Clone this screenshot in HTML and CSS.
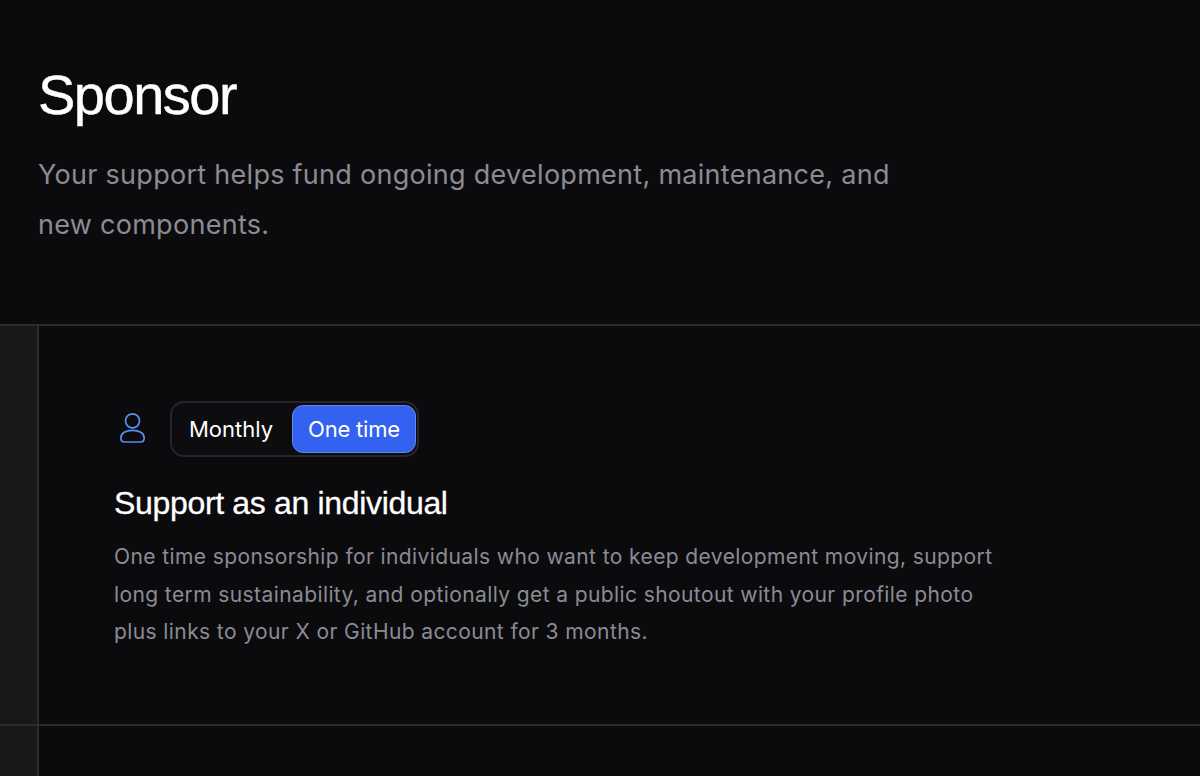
FILE: index.html
```html
<!DOCTYPE html>
<html lang="en">
<head>
<meta charset="utf-8">
<title>Sponsor</title>
<link rel="stylesheet" href="styles.css">
</head>
<body>
<header class="hero">
  <h1 class="hero-title">Sponsor</h1>
  <p class="hero-text">Your support helps fund ongoing development, maintenance, and new components.</p>
</header>
<section class="row row-main">
  <div class="gutter"></div>
  <div class="content">
    <div class="controls">
      <svg class="icon" width="30" height="32" viewBox="0 1 30 32" fill="none" stroke="#5b8def" stroke-width="1.7">
        <circle cx="15.5" cy="8.85" r="7"/>
        <path d="M3.85 26C3.85 21 9 18.3 15.5 18.3S27.15 21 27.15 26C27.15 28.7 25.5 30 23.5 30H7.5C5.5 30 3.85 28.7 3.85 26Z"/>
      </svg>
      <div class="toggle">
        <span class="opt">Monthly</span>
        <span class="opt opt-active">One time</span>
      </div>
    </div>
    <h2 class="card-title">Support as an individual</h2>
    <p class="card-text">One time sponsorship for individuals who want to keep development moving, support long term sustainability, and optionally get a public shoutout with your profile photo plus links to your X or GitHub account for 3 months.</p>
  </div>
</section>
<section class="row row-next">
  <div class="gutter"></div>
  <div class="content"></div>
</section>
</body>
</html>
```
FILE: styles.css
```css
* { box-sizing: border-box; }
html, body { height: 100%; }
body {
  margin: 0;
  height: 776px;
  overflow: hidden;
  background: #0b0b0e;
  font-family: Inter, "Liberation Sans", sans-serif;
}
.hero { height: 324px; padding: 62px 38px 0; }
.hero-title {
  margin: 0;
  font: 400 56px/66px "Liberation Sans", Arial, sans-serif;
  letter-spacing: -1.5px;
  color: #fff;
  -webkit-text-stroke: 0.4px #fff;
}
.hero-text {
  margin: 22px 0 0;
  width: 880px;
  font-size: 27px;
  letter-spacing: 0.28px;
  line-height: 50px;
  color: #8b8b94;
}
.row { display: flex; border-top: 2px solid #2c2c2f; }
.row-main { height: 400px; }
.row-next { height: 52px; }
.gutter { width: 39px; flex: none; background: #18181a; border-right: 2px solid #2c2c2f; }
.content { flex: 1; padding: 75px 0 0 75px; }
.controls { display: flex; align-items: center; gap: 23px; }
.icon { margin-left: 3px; display: block; }
.toggle {
  display: flex;
  align-items: center;
  height: 56px;
  padding: 2px 1px 2px 2px;
  border: 2px solid #26262a;
  border-radius: 14px;
  background: #0d0d10;
}
.opt {
  padding: 0 19px 0 15px;
  font-size: 22px;
  line-height: 50px;
  color: #fff;
}
.opt-active {
  padding: 0 15px;
  background: #3361f0;
  border: 1px solid #6286f2;
  border-radius: 11px;
  line-height: 46px;
  letter-spacing: -0.2px;
}
.card-title {
  margin: 26px 0 0;
  font: 400 32px/40px "Liberation Sans", Arial, sans-serif;
  letter-spacing: -0.33px;
  color: #fff;
  -webkit-text-stroke: 0.3px #fff;
}
.card-text {
  margin: 15px 0 0;
  width: 900px;
  font-size: 21px;
  letter-spacing: 0.4px;
  line-height: 37.5px;
  color: #8b8b94;
}
```
